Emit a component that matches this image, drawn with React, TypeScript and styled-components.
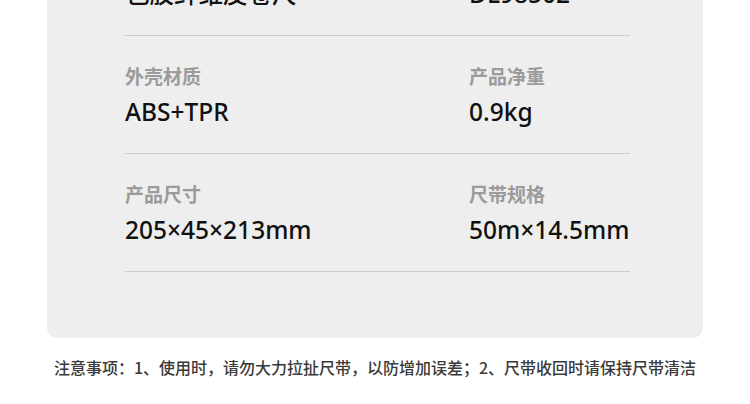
import styled, { createGlobalStyle } from "styled-components";

const GlobalStyle = createGlobalStyle`
  html, body {
    margin: 0;
    padding: 0;
    background: #fff;
    overflow: hidden;
  }
  body {
    font-family: "Noto Sans CJK SC", "Noto Sans", sans-serif;
  }
`;

type Spec = { label: string; value: string };

const rows: Spec[][] = [
  [
    { label: "产品名称", value: "包胶纤维皮卷尺" },
    { label: "产品型号", value: "DL98502" },
  ],
  [
    { label: "外壳材质", value: "ABS+TPR" },
    { label: "产品净重", value: "0.9kg" },
  ],
  [
    { label: "产品尺寸", value: "205×45×213mm" },
    { label: "尺带规格", value: "50m×14.5mm" },
  ],
];

const Page = styled.div`
  width: 750px;
  height: 404px;
  display: flex;
  flex-direction: column;
  align-items: center;
`;

const Card = styled.div`
  width: 656px;
  margin-top: -82px;
  background: #eeeeee;
  border-radius: 10px;
  padding: 0 73px 66px 78px;
  box-sizing: border-box;
`;

const Row = styled.div`
  display: grid;
  grid-template-columns: 344px 1fr;
  padding: 30px 0 29px;
  border-bottom: 1px solid #cdcdcd;
`;

const Cell = styled.div`
  display: flex;
  flex-direction: column;
  gap: 14px;
`;

const Label = styled.span`
  font-size: 19px;
  line-height: 19px;
  font-weight: 700;
  color: #9b9b9b;
`;

const Value = styled.span`
  font-family: "Noto Sans", "Noto Sans CJK SC", sans-serif;
  font-size: 24.5px;
  line-height: 25px;
  font-weight: 500;
  color: #111;
  white-space: nowrap;
`;

const Note = styled.p`
  margin: 21px 0 0;
  font-size: 16px;
  line-height: 16px;
  font-weight: 500;
  color: #3a3a3a;
  white-space: nowrap;
`;

export default function App() {
  return (
    <>
      <GlobalStyle />
      <Page>
        <Card>
          {rows.map((row, i) => (
            <Row key={i}>
              {row.map((c) => (
                <Cell key={c.label}>
                  <Label>{c.label}</Label>
                  <Value>{c.value}</Value>
                </Cell>
              ))}
            </Row>
          ))}
        </Card>
        <Note>
          注意事项：1、使用时，请勿大力拉扯尺带，以防增加误差；2、尺带收回时请保持尺带清洁
        </Note>
      </Page>
    </>
  );
}
